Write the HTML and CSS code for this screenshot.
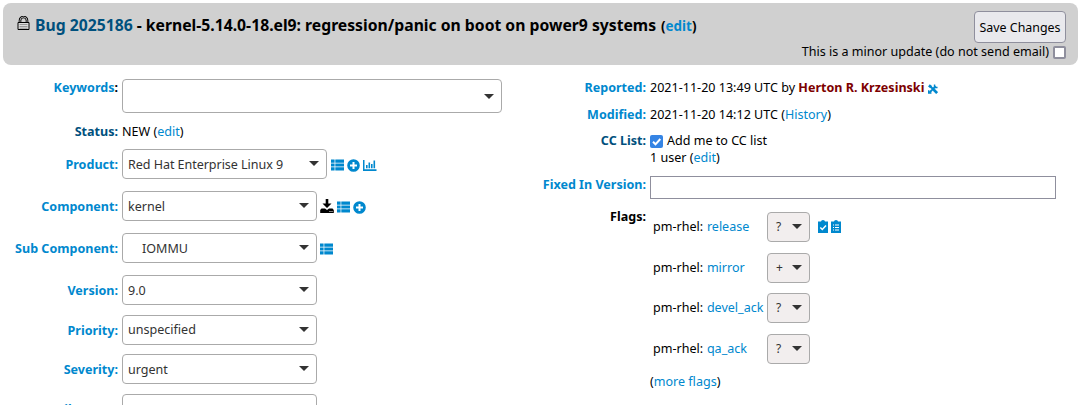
FILE: index.html
```html
<!DOCTYPE html>
<html lang="en">
<head>
<meta charset="utf-8">
<title>Bug 2025186</title>
<link rel="stylesheet" href="styles.css">
</head>
<body>
<svg class="defs" width="0" height="0">
  <symbol id="list" viewBox="0 0 13 11"><path d="M0 0h3.600v3.200H0zM4.300 0H13v3.200H4.300zM0 3.900h3.600v3.200H0zM4.300 3.900H13v3.200H4.300zM0 7.800h3.600V11H0zM4.300 7.800H13V11H4.300z"/></symbol>
  <symbol id="plus" viewBox="0 0 13 13"><path fill-rule="evenodd" d="M6.500.2a6.300 6.300 0 1 0 0 12.600 6.300 6.300 0 0 0 0-12.600zM5.500 3h2v2.500H10v2H7.500V10h-2V7.500H3v-2h2.500z"/></symbol>
  <symbol id="chart" viewBox="0 0 14 12"><path d="M0 1h1.500v9.300H13.500V12H0zM3 6h1.600v3.200H3zM5.500 3.500h1.600v5.700H5.500zM8 5h1.600v4.200H8zM10.500 1.500h1.600v7.700h-1.600z"/></symbol>
  <symbol id="download" viewBox="0 0 14 14"><path fill-rule="evenodd" d="M5.700 0h2.600v4.500H11.500L7 9 2.500 4.500h3.200zM1.500 9.500H5L7 11 9 9.500h3.500L13.800 11v3H.2v-3zM9.500 12v1h1v-1zM11.500 12v1h1v-1z"/></symbol>
</svg>
<header class="titlebar">
  <h1 class="title">
    <svg class="lock" viewBox="0 0 12 14"><path d="M2.500 6V4.500a3.500 3.500 0 0 1 7 0V6" fill="none" stroke="#000" stroke-width="2.600"/><path d="M2.500 6V4.500a3.500 3.500 0 0 1 7 0V6" fill="none" stroke="#ddd" stroke-width=".8"/><path d="M.5 6.500h11v7H.5z" fill="#ddd" stroke="#000"/><path d="M2 8.500h8M2 10.500h8M2 12.200h8" stroke="#888" stroke-width=".8"/></svg>
    <span class="title-text"><a class="dark">Bug 2025186</a> - kernel-5.14.0-18.el9: regression/panic on boot on power9 systems</span>
    <span class="title-edit">(<a>edit</a>)</span>
  </h1>
  <div class="actions">
    <button class="save">Save Changes</button>
    <label class="minor"><span>This is a minor update (do not send email)</span><span class="check"></span></label>
  </div>
</header>
<main class="columns">
  <section class="left">
    <div class="row keywords"><div class="label"><a>Keywords</a>:</div><div class="select wide"></div></div>
    <div class="row status"><div class="label dark">Status:</div><div class="value">NEW (<a>edit</a>)</div></div>
    <div class="row tall"><div class="label"><a>Product:</a></div><div class="select product"><span>Red Hat Enterprise Linux 9</span></div>
      <div class="icons"><svg class="i-list"><use href="#list"/></svg><svg class="i-plus"><use href="#plus"/></svg><svg class="i-chart"><use href="#chart"/></svg></div></div>
    <div class="row tall"><div class="label"><a>Component:</a></div><div class="select"><span>kernel</span></div>
      <div class="icons near"><svg class="i-down"><use href="#download"/></svg><svg class="i-list"><use href="#list"/></svg><svg class="i-plus"><use href="#plus"/></svg></div></div>
    <div class="row tall"><div class="label"><a>Sub Component:</a></div><div class="select indent"><span>IOMMU</span></div>
      <div class="icons near"><svg class="i-list"><use href="#list"/></svg></div></div>
    <div class="row version"><div class="label"><a>Version:</a></div><div class="select"><span>9.0</span></div></div>
    <div class="row priority"><div class="label"><a>Priority:</a></div><div class="select raised"><span>unspecified</span></div></div>
    <div class="row version"><div class="label"><a>Severity:</a></div><div class="select"><span>urgent</span></div></div>
    <div class="row milestone"><div class="label"><a>Target Milestone:</a></div><div class="select"></div></div>
  </section>
  <section class="right">
    <div class="row reported"><div class="label"><a>Reported:</a></div><div class="value">2021-11-20 13:49 UTC by <b class="user">Herton R. Krzesinski</b><svg class="i-tools" viewBox="0 0 11 11"><path d="M1 1.500l2.500 2M6.500 6.500L10 10" stroke="#0088ce" stroke-width="3"/><path d="M1.500 9.500l7-7M3 3l5 5" stroke="#0088ce" stroke-width="2.200"/><path d="M7.200.5v3.300h3.300M.8 7v3h3" fill="none" stroke="#0088ce" stroke-width="1.600"/></svg></div></div>
    <div class="row modified"><div class="label"><a>Modified:</a></div><div class="value">2021-11-20 14:12 UTC (<a>History</a>)</div></div>
    <div class="row cc"><div class="label dark">CC List:</div><div class="value"><div class="cc-add"><svg class="checked" viewBox="0 0 13 13"><rect width="13" height="13" rx="2" fill="#3584e4"/><path d="M3 6.800l2.500 2.500L10.300 4" fill="none" stroke="#fff" stroke-width="2"/></svg>Add me to CC list</div><div>1 user (<a>edit</a>)</div></div></div>
    <div class="row fixed"><div class="label"><a>Fixed In Version:</a></div><input class="input" type="text"></div>
    <div class="row flags"><div class="label">Flags:</div>
      <div class="flag-list">
        <div class="flag"><span class="flag-name">pm-rhel: <a>release</a></span><div class="select small"><span>?</span></div>
          <div class="icons clips"><svg viewBox="0 0 10 13"><path d="M0 1.500h3a2 1.500 0 0 1 4 0h3V13H0z" fill="#0088ce"/><path d="M2.300 7.500l2 2 3.700-4" fill="none" stroke="#fff" stroke-width="1.500"/></svg><svg viewBox="0 0 10 13"><path d="M0 1.500h3a2 1.500 0 0 1 4 0h3V13H0z" fill="#0088ce"/><path d="M2 5h1M4 5h4M2 7.500h1M4 7.500h4M2 10h1M4 10h4" stroke="#fff"/></svg></div></div>
        <div class="flag"><span class="flag-name">pm-rhel: <a>mirror</a></span><div class="select small"><span>+</span></div></div>
        <div class="flag"><span class="flag-name">pm-rhel: <a>devel_ack</a></span><div class="select small"><span>?</span></div></div>
        <div class="flag"><span class="flag-name">pm-rhel: <a>qa_ack</a></span><div class="select small"><span>?</span></div></div>
        <div class="more">(<a>more flags</a>)</div>
      </div>
    </div>
  </section>
</main>
</body>
</html>
```
FILE: styles.css
```css
* { box-sizing: border-box; }
html, body { height: 405px; overflow: hidden; }
body { margin: 0; padding: 3px 3px 0; background: #fff; color: #000; font: 12.55px/18px "Noto Sans", sans-serif; }
a { color: #0088ce; }
.dark { color: #00507d; }
.defs { position: absolute; }
.titlebar { display: flex; justify-content: space-between; width: 1075px; height: 62px; padding: 8px 12px 0 14px; background: #d0d0d0; border-radius: 8px; }
.title { display: flex; align-items: center; height: 28px; margin: 0; font-size: 15.72px; line-height: 28px; white-space: nowrap; }
.lock { width: 13px; height: 14px; margin: -4px 5px 0 0; }
.title-edit { margin-left: 5px; padding-top: 1px; font-size: 13.400px; }
.actions { display: flex; flex-direction: column; align-items: flex-end; }
.save { width: 92px; height: 32px; padding: 2px 0 0; font: inherit; font-size: 12.400px; color: #000; background: #e9e9ed; border: 1px solid #8f8f9d; border-radius: 4px; }
.minor { display: flex; align-items: center; gap: 4px; height: 18px; white-space: nowrap; }
.check { width: 13px; height: 13px; margin-top: 1px; background: #fff; border: 2px solid #8f8f9d; border-radius: 2px; }
.columns { display: flex; padding-top: 14px; }
.left { width: 530px; }
.right { width: 540px; }
.row { display: flex; white-space: nowrap; }
.label { flex: none; width: 115px; margin-right: 4px; text-align: right; font-weight: bold; }
.right .label { width: 113px; }
.select { display: flex; align-items: center; flex: none; position: relative; width: 195px; height: 30px; padding: 1px 5px 0 5px; color: #333; background: #fff; border: 1px solid #aaa; border-radius: 4px; }
.select::after { content: ""; position: absolute; right: 7px; top: 11px; border: 5px solid transparent; border-top-color: #333; border-bottom: 0; }
.raised { padding-top: 0; padding-bottom: 1px; }
.wide { width: 380px; height: 34px; }
.wide::after { top: 14px; }
.product { width: 205px; letter-spacing: -0.05px; }
.indent { padding-left: 19px; }
.keywords { height: 43px; }
.status { height: 27px; }
.status > * { padding-top: 1px; }
.tall { height: 42px; }
.version { height: 40px; }
.priority { height: 39px; }
.tall .label, .version .label, .priority .label, .milestone .label { padding-top: 7px; }
.icons { display: flex; align-items: center; height: 32px; gap: 3px; margin-left: 4px; fill: #0088ce; }
.near { margin-left: 3px; }
.i-list { width: 13px; height: 12px; }
.i-plus { width: 13px; height: 13px; }
.i-chart { width: 14px; height: 12px; margin-top: -1px; }
.i-down { width: 14px; height: 14px; margin-top: -2px; fill: #000; }
.user { color: #7d0000; }
.i-tools { width: 10px; height: 10px; margin: 0 0 -2px 4px; }
.reported { height: 27px; }
.modified { height: 26px; }
.cc { height: 43px; line-height: 17px; }
.cc-add { display: flex; align-items: center; gap: 4px; height: 17px; }
.checked { width: 13px; height: 13px; margin-top: 1px; }
.fixed { height: 37px; }
.fixed .label { padding-top: 1px; }
.input { width: 406px; height: 23px; margin-top: 1px; border: 1px solid #8f8f9d; }
.flags .label { line-height: 10px; }
.flag { display: flex; align-items: flex-start; height: 40.7px; }
.flag-name { width: 117px; padding: 6px 0 0 3px; }
.flag-name a { margin-left: 0.5px; }
.small { width: 43px; background: #f2eeee; padding-left: 8px; padding-top: 0; font-size: 12px; }
.clips { height: 28px; margin-left: 8px; }
.clips svg { width: 10px; height: 13px; }
.more { padding-top: 1px; line-height: 12px; }
```
